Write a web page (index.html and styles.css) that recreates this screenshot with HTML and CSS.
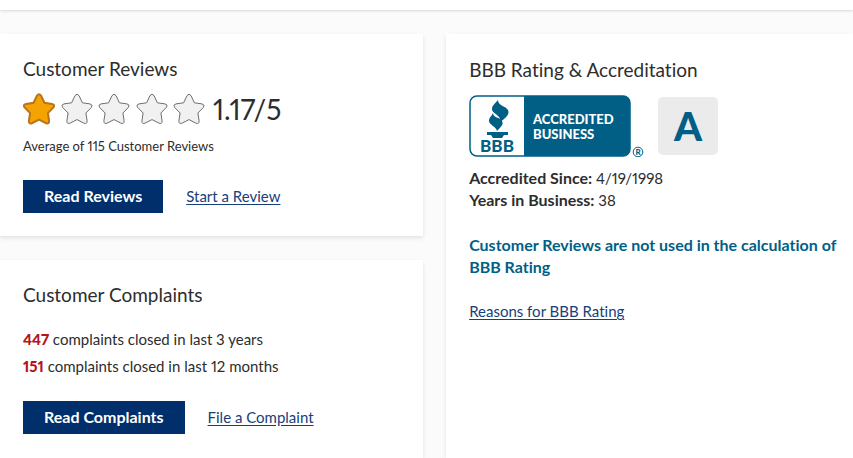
FILE: index.html
```html
<!DOCTYPE html>
<html lang="en">
<head>
  <meta charset="UTF-8">
  <meta name="viewport" content="width=device-width, initial-scale=1.0">
  <title>BBB Business Profile</title>
  <link rel="stylesheet" href="styles.css">
</head>
<body>
  <header class="top-bar"></header>

  <svg width="0" height="0" class="sprite" aria-hidden="true">
    <symbol id="star" viewBox="0 0 32 32">
      <path d="M14 2.6Q16 -0.2 18 2.6L21.4 9.8L29 10.9Q32.4 11.7 30.4 14.4L24.9 20L26.1 27.8Q26.2 31.6 22.8 30.1L16 26.6L9.2 30.1Q5.8 31.6 5.9 27.8L7.1 20L1.6 14.4Q-0.4 11.7 3 10.9L10.6 9.8Z"/>
    </symbol>
  </svg>

  <main class="profile">
    <div class="column">
      <section class="card">
        <h2>Customer Reviews</h2>
        <div class="rating">
          <div class="stars" role="img" aria-label="1.17 out of 5 stars">
            <svg class="star filled"><use href="#star"/></svg>
            <svg class="star"><use href="#star"/></svg>
            <svg class="star"><use href="#star"/></svg>
            <svg class="star"><use href="#star"/></svg>
            <svg class="star"><use href="#star"/></svg>
          </div>
          <span class="score">1.17/5</span>
        </div>
        <p class="average">Average of 115 Customer Reviews</p>
        <div class="actions">
          <button type="button" class="btn">Read Reviews</button>
          <a href="#">Start a Review</a>
        </div>
      </section>

      <section class="card">
        <h2>Customer Complaints</h2>
        <div class="complaints">
          <p><strong>447</strong> complaints closed in last 3 years</p>
          <p><strong>151</strong> complaints closed in last 12 months</p>
        </div>
        <div class="actions">
          <button type="button" class="btn">Read Complaints</button>
          <a href="#">File a Complaint</a>
        </div>
      </section>
    </div>

    <section class="card accreditation">
      <h2>BBB Rating &amp; Accreditation</h2>
      <div class="badges">
        <svg class="seal" viewBox="0 0 175 62" role="img" aria-label="BBB Accredited Business">
          <rect x="1" y="1" width="160" height="60" rx="7" fill="#fff" stroke="#015f86" stroke-width="1.5"/>
          <path d="M55 1H154Q161 1 161 8V54Q161 61 154 61H55Z" fill="#015f86"/>
          <path d="M29 5C27 8 23 10 23 14C23 19 33 20 31 27C37 23 41 19 39 15C37 11 29 11 29 5Z" fill="#015f86"/>
          <path d="M24 18C23 21 20 22 20 26C20 30 27 31 28 36C32 32 35 29 33 26C31 22 24 23 24 18Z" fill="#015f86"/>
          <path d="M18 37H39V40H35L33 43H24L22 40H18Z" fill="#015f86"/>
          <text x="28" y="57" class="seal-bbb">BBB</text>
          <text x="64" y="29" class="seal-text">ACCREDITED</text>
          <text x="64" y="44" class="seal-text">BUSINESS</text>
          <circle cx="169" cy="57" r="4.8" fill="none" stroke="#015f86"/>
          <text x="169" y="60" class="seal-mark">R</text>
        </svg>
        <span class="grade">A</span>
      </div>
      <p><strong>Accredited Since:</strong> 4/19/1998</p>
      <p><strong>Years in Business:</strong> 38</p>
      <p class="notice">Customer Reviews are not used in the calculation of BBB Rating</p>
      <p><a href="#">Reasons for BBB Rating</a></p>
    </section>
  </main>
</body>
</html>
```

FILE: styles.css
```css
* {
  box-sizing: border-box;
}

body {
  display: flex;
  flex-direction: column;
  min-height: 100vh;
  margin: 0;
  background-color: #fbfbfb;
  color: #2d2d2d;
  font-family: Lato, sans-serif;
  font-size: 15px;
  font-variant-ligatures: no-common-ligatures;
  font-variant-numeric: proportional-nums;
  line-height: 22px;
}

h2,
p {
  margin: 0;
}

h2 {
  font-size: 19px;
  font-weight: 400;
  line-height: 24px;
}

a {
  color: #17407a;
  text-underline-offset: 2px;
}

.sprite {
  position: absolute;
}

.top-bar {
  height: 10px;
  background-color: #ffffff;
  box-shadow: 0 1px 3px rgba(0, 0, 0, 0.14);
}

.profile {
  display: grid;
  flex: 1;
  grid-template-columns: 26fr 25fr;
  gap: 23px;
  margin-top: 24px;
}

.column {
  display: flex;
  flex-direction: column;
  gap: 24px;
}

.card {
  background-color: #ffffff;
  padding: 23px;
  box-shadow: 0 2px 4px rgba(0, 0, 0, 0.1);
}

.column .card:last-child {
  flex: 1;
}

/* Reviews */
.rating {
  display: flex;
  align-items: center;
  gap: 8px;
  height: 32px;
  margin-top: 12px;
}

.stars {
  display: flex;
  justify-content: space-between;
  width: 182px;
}

.star {
  width: 32px;
  height: 32px;
  fill: #f1f1f1;
  stroke: #6e6e6e;
  stroke-width: 1;
  overflow: visible;
}

.star.filled {
  fill: #f5a300;
  stroke: #b8741a;
  stroke-width: 2;
}

.score {
  font-size: 28px;
  line-height: 32px;
}

.average {
  margin-top: 11px;
  font-size: 13px;
  line-height: 20px;
}

.actions {
  display: flex;
  align-items: baseline;
  gap: 23px;
  margin-top: 24px;
}

.btn {
  background-color: #002f6c;
  border: none;
  color: #ffffff;
  cursor: pointer;
  font-family: inherit;
  font-size: 16px;
  font-weight: 700;
  line-height: 17px;
  padding: 7px 21px 9px;
}

/* Complaints */
.complaints {
  margin-top: 19px;
  line-height: 27px;
}

.complaints strong {
  color: #b5121b;
  font-weight: 900;
}

.complaints + .actions {
  margin-top: 21px;
}

/* Rating and accreditation */
.accreditation {
  padding: 24px 12px 23px 23px;
}

.accreditation strong {
  font-size: 16px;
}

.badges {
  display: flex;
  align-items: center;
  gap: 14px;
  margin: 13px 0 10px;
}

.seal {
  width: 175px;
  height: 62px;
}

.seal text {
  font-family: Lato, sans-serif;
  font-weight: 900;
}

.seal-bbb {
  fill: #015f86;
  font-size: 17px;
  text-anchor: middle;
}

.seal-text {
  fill: #ffffff;
  font-size: 13px;
}

.seal-mark {
  fill: #015f86;
  font-size: 8px;
  text-anchor: middle;
}

.grade {
  width: 60px;
  background-color: #ebebeb;
  border-radius: 5px;
  color: #015f86;
  font-size: 40px;
  font-weight: 900;
  line-height: 58px;
  text-align: center;
}

.notice {
  margin: 23px 0 22px;
  color: #015f86;
  font-size: 16px;
  font-weight: 700;
}
```
